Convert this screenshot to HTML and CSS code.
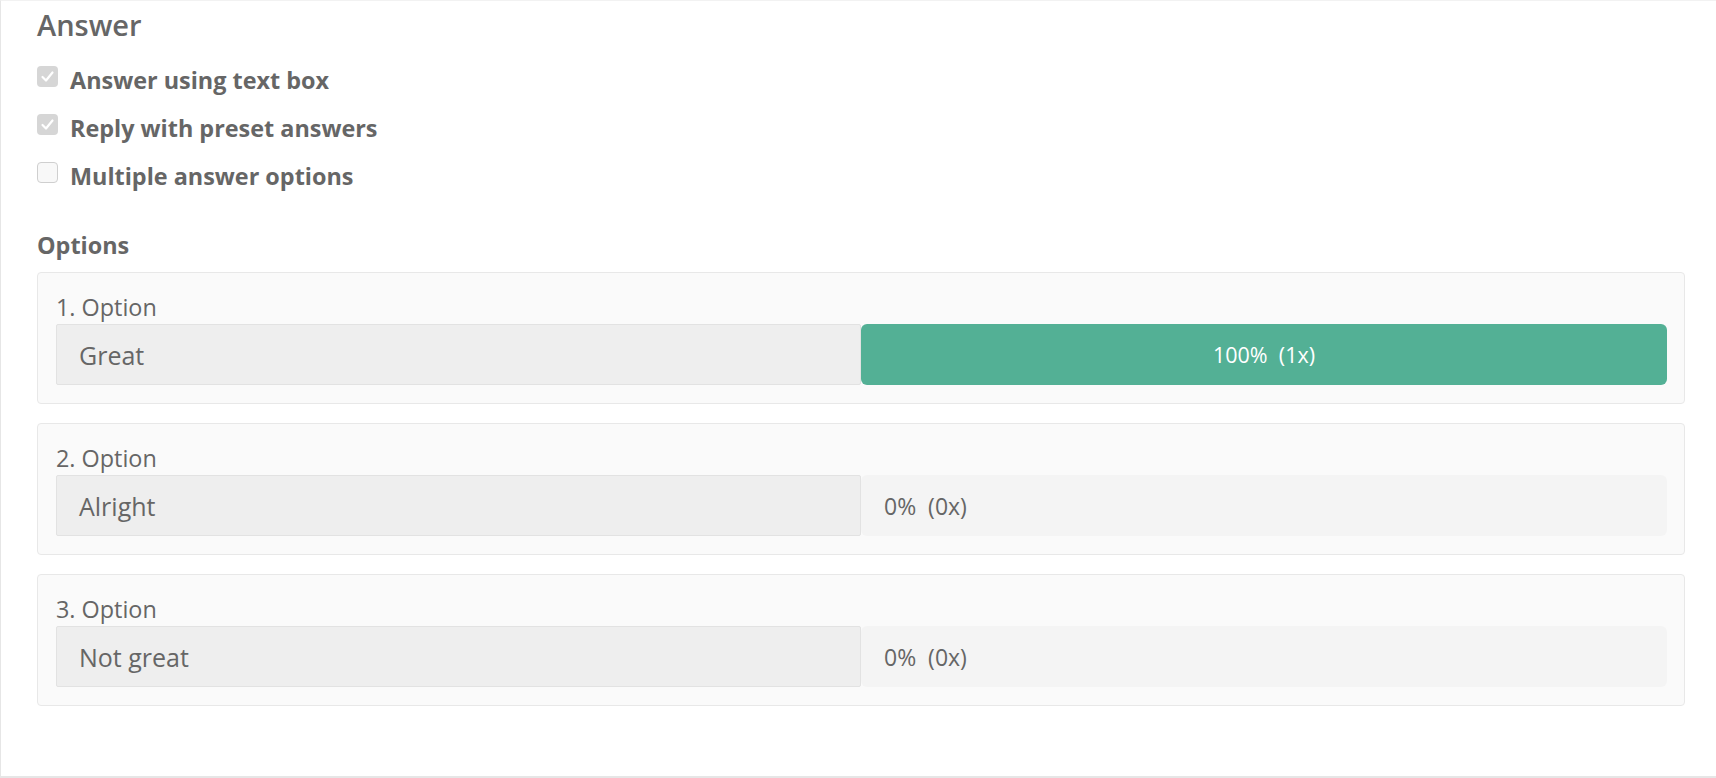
FILE: index.html
```html
<!DOCTYPE html>
<html>
<head>
<meta charset="utf-8">
<link rel="stylesheet" href="styles.css">
</head>
<body>
<div class="panel">
  <h2 class="title">Answer</h2>
  <div class="checks">
    <div class="check-row">
      <span class="box checked"><svg viewBox="0 0 21 21" width="21" height="21"><polyline points="5.5,11 9,14.5 15.5,6.5" fill="none" stroke="#fff" stroke-width="2.2" stroke-linecap="round" stroke-linejoin="round"/></svg></span>
      <span class="check-label">Answer using text box</span>
    </div>
    <div class="check-row">
      <span class="box checked"><svg viewBox="0 0 21 21" width="21" height="21"><polyline points="5.5,11 9,14.5 15.5,6.5" fill="none" stroke="#fff" stroke-width="2.2" stroke-linecap="round" stroke-linejoin="round"/></svg></span>
      <span class="check-label">Reply with preset answers</span>
    </div>
    <div class="check-row">
      <span class="box"></span>
      <span class="check-label">Multiple answer options</span>
    </div>
  </div>
  <h3 class="subtitle">Options</h3>
  <div class="cards">
    <div class="card">
      <div class="card-label">1. Option</div>
      <div class="option-row">
        <div class="option-input">Great</div>
        <div class="result full">100%&nbsp; (1x)</div>
      </div>
    </div>
    <div class="card">
      <div class="card-label">2. Option</div>
      <div class="option-row">
        <div class="option-input">Alright</div>
        <div class="result empty">0%&nbsp; (0x)</div>
      </div>
    </div>
    <div class="card">
      <div class="card-label">3. Option</div>
      <div class="option-row">
        <div class="option-input">Not great</div>
        <div class="result empty">0%&nbsp; (0x)</div>
      </div>
    </div>
  </div>
</div>
</body>
</html>
```
FILE: styles.css
```css
html, body {
  margin: 0;
  padding: 0;
  background: #ffffff;
  overflow: hidden;
}
body {
  font-family: "Open Sans", "Liberation Sans", sans-serif;
  color: #666666;
}
.panel {
  box-sizing: border-box;
  height: 778px;
  width: 1740px;
  border: 1px solid #e6e6e6;
  border-top-color: #f2f2f2;
  border-bottom-width: 2px;
  padding: 4px 0 0 36px;
}
.title {
  margin: 0;
  font-size: 29px;
  font-weight: 600;
  line-height: 40px;
  color: #666666;
}
.checks {
  margin-top: 19px;
  display: flex;
  flex-direction: column;
  gap: 16px;
}
.check-row {
  display: flex;
  align-items: flex-start;
  height: 32px;
}
.box {
  box-sizing: border-box;
  width: 21px;
  height: 21px;
  margin-top: 2px;
  border-radius: 4px;
  border: 1px solid #cfcfcf;
  background: #f8f8f8;
  display: flex;
  flex: none;
}
.box.checked {
  border: none;
  background: #d6d6d6;
}
.check-label {
  margin-left: 12px;
  font-size: 23.4px;
  font-weight: 700;
  line-height: 32px;
}
.subtitle {
  margin: 37px 0 0 0;
  font-size: 23.4px;
  font-weight: 700;
  line-height: 32px;
}
.cards {
  margin-top: 11px;
  width: 1648px;
  display: flex;
  flex-direction: column;
  gap: 19px;
}
.card {
  box-sizing: border-box;
  background: #fafafa;
  border: 1px solid #e8e8e8;
  border-radius: 4px;
  padding: 18px 17px 18px 18px;
}
.card-label {
  font-size: 23.4px;
  line-height: 33px;
}
.option-row {
  display: flex;
  height: 61px;
}
.option-input {
  box-sizing: border-box;
  flex: 0 0 805px;
  background: #eeeeee;
  border: 1px solid #e2e2e2;
  border-radius: 2px;
  padding-left: 22px;
  font-size: 25px;
  display: flex;
  align-items: center;
}
.result {
  flex: 1;
  border-radius: 6px;
  line-height: 30px;
  display: flex;
  align-items: center;
}
.result.full {
  background: #53b095;
  color: #ffffff;
  justify-content: center;
  font-size: 21.5px;
}
.result.empty {
  background: #f4f4f4;
  padding-left: 23px;
  font-size: 23px;
}
```
